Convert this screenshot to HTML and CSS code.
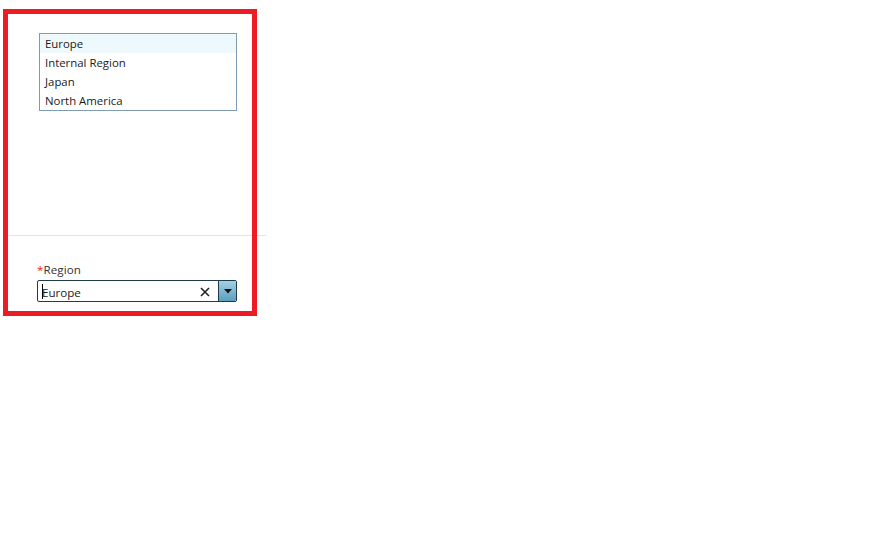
FILE: index.html
```html
<!DOCTYPE html>
<html>
<head>
<meta charset="utf-8">
<link rel="stylesheet" href="styles.css">
</head>
<body>
<div class="frame">
  <div class="listbox">
    <div class="item selected">Europe</div>
    <div class="item">Internal Region</div>
    <div class="item">Japan</div>
    <div class="item">North America</div>
  </div>
  <div class="divider"></div>
  <div class="field">
    <div class="label"><span class="req">*</span>Region</div>
    <div class="combo">
      <div class="value"><span class="caret"></span>Europe</div>
      <svg class="clear" width="10" height="10" viewBox="0 0 10 10"><path d="M1 1 L9 9 M9 1 L1 9" stroke="#222" stroke-width="1.6" fill="none"/></svg>
      <div class="drop"><svg width="8" height="5" viewBox="0 0 8 5"><path d="M0 0 H8 L4 4.5 Z" fill="#111"/></svg></div>
    </div>
  </div>
</div>
</body>
</html>
```
FILE: styles.css
```css
html, body {
  margin: 0;
  padding: 0;
  background: #ffffff;
}
body {
  font-family: "Open Sans", "Noto Sans", sans-serif;
  font-size: 11.4px;
  color: #1a1a1a;
}
.frame {
  position: relative;
  margin: 9px 0 0 3px;
  width: 254px;
  height: 307px;
  box-sizing: border-box;
  padding: 5px;
  display: flex;
  flex-direction: column;
}
.frame::after {
  content: "";
  position: absolute;
  inset: 0;
  border: 5px solid #ed1c24;
  pointer-events: none;
}
.listbox {
  margin: 19px 0 0 31px;
  width: 198px;
  height: 78px;
  box-sizing: border-box;
  border: 1px solid #7f9bb3;
  background: #fff;
}
.item {
  height: 19px;
  line-height: 19px;
  padding-left: 5px;
  white-space: nowrap;
}
.item.selected {
  background: #eef9fd;
}
.divider {
  margin-top: 124px;
  height: 1px;
  background: #e3e3e3;
  width: 258px;
  flex: none;
}
.field {
  margin: 27px 0 0 29px;
}
.label {
  font-size: 11.6px;
  color: #333333;
  line-height: 14px;
  height: 17px;
  letter-spacing: 0.1px;
}
.req {
  color: #ee2020;
}
.combo {
  width: 200px;
  height: 22px;
  box-sizing: border-box;
  border: 1px solid #1f3a48;
  border-radius: 2px;
  display: flex;
  align-items: center;
  background: #fff;
  overflow: hidden;
}
.value {
  flex: 1;
  padding-left: 4px;
  padding-top: 3px;
  line-height: 17px;
  font-size: 11.6px;
  position: relative;
}
.caret {
  position: absolute;
  left: 4px;
  top: 3px;
  width: 1px;
  height: 15px;
  background: #000;
}
.clear {
  margin-right: 8px;
  margin-top: 1px;
}
.drop {
  width: 17px;
  height: 20px;
  border-left: 1px solid #1f3a48;
  background: linear-gradient(#a3d0e4, #5b9fc0);
  display: flex;
  align-items: center;
  justify-content: center;
}
```
